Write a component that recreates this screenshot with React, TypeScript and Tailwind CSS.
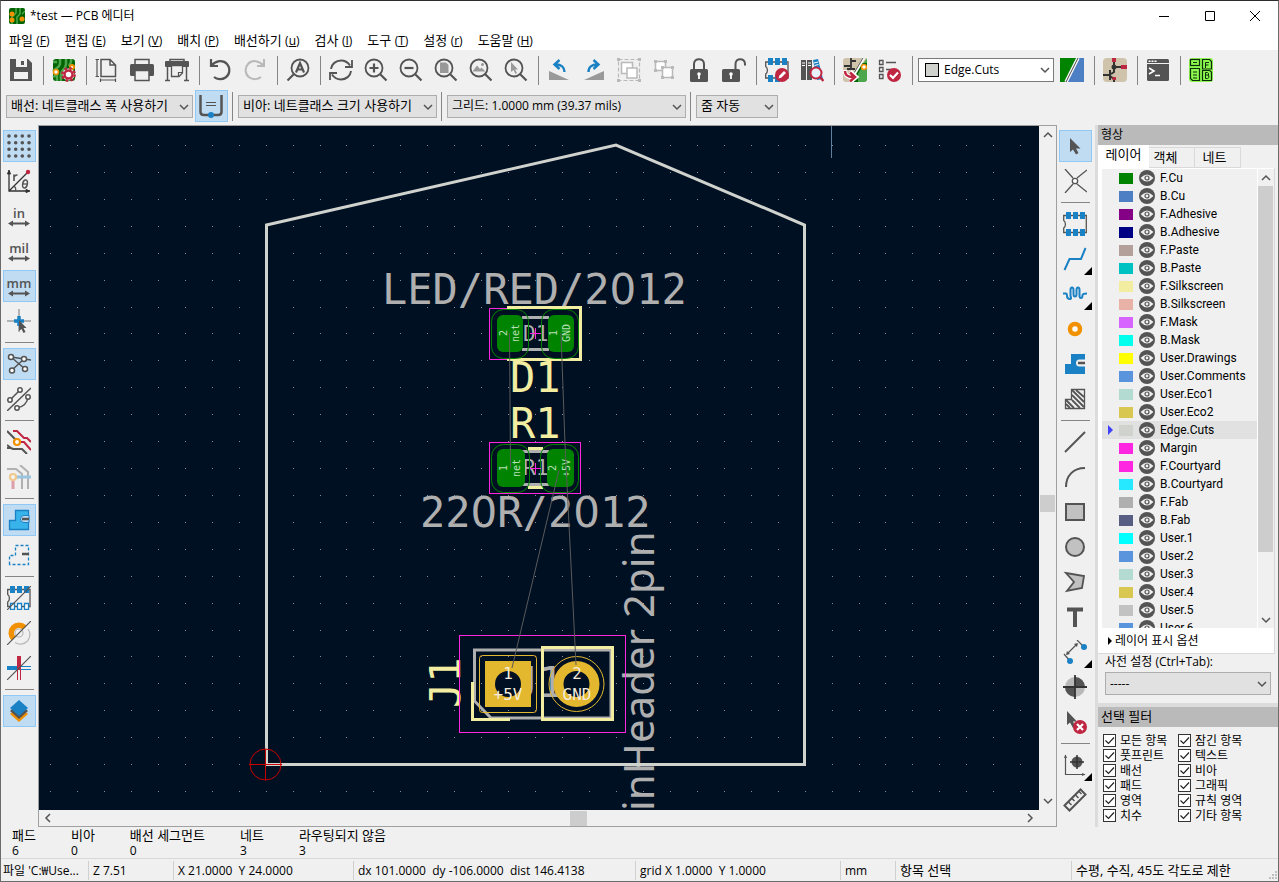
import { useState, type ReactNode } from "react";

const G = "#545454";
const B = "#1a81c4";
const R = "#bf2641";
const O = "#f29100";

function Icon({ children }: { children: ReactNode }) {
  return (
    <svg width="24" height="24" viewBox="0 0 24 24" fill="none" stroke={G} strokeWidth="2" aria-hidden="true">
      {children}
    </svg>
  );
}

const lens = (
  <>
    <circle cx="10" cy="10" r="8.5" strokeWidth="1.8" />
    <path d="M16 16l6.5 6.5" strokeWidth="2.2" />
  </>
);

const icons: Record<string, ReactNode> = {
  save: (
    <>
      <path d="M1 1H19L23 5V23H1Z" fill={G} stroke="none" />
      <path d="M7 1H18V9H7Z M5 14H19V21H5Z" fill="#f0f0f0" stroke="none" />
      <path d="M12 3h3v4h-3z" fill={G} stroke="none" />
    </>
  ),
  setup: (
    <>
      <rect x="1" y="1" width="22" height="22" rx="3" fill="#006400" stroke="none" />
      <path d="M8 1V5Q8 8 5 10L1 13M14 1V6Q14 9 11 12T9 23M19 1V4L17 8M1 4H5M1 19L5 17V23" stroke="#4ca64c" strokeWidth="2.5" />
      <circle cx="4" cy="14" r="2.5" fill="#fff" stroke={O} strokeWidth="1.5" />
      <circle cx="20" cy="9" r="2" fill="#fff" stroke={O} />
      <circle cx="16.5" cy="16.5" r="6" fill="#fff" stroke="none" />
      <circle cx="16.5" cy="16.5" r="6.2" stroke={R} strokeWidth="2.5" strokeDasharray="2.6 2.27" />
      <circle cx="16.5" cy="16.5" r="4" fill="#fff" stroke={R} strokeWidth="2.5" />
    </>
  ),
  page: (
    <>
      <path d="M6 1.5H15L20.5 7V18.5H6Z M15 1.5V7H20.5" strokeWidth="1.5" />
      <path d="M2 1V19M.5 1.5H4M.5 18.5H4M5 22H21M5.5 20.5V24M20.5 20.5V24" strokeWidth="1.2" />
    </>
  ),
  print: (
    <>
      <path d="M5 6V1.5H19V6" strokeWidth="1.5" />
      <rect x="0" y="6" width="24" height="12" rx="1.5" fill={G} stroke="none" />
      <path d="M5 12.5H19V22.5H5Z" fill="#f0f0f0" strokeWidth="1.5" />
    </>
  ),
  plot: (
    <>
      <path d="M5 3V1.5H19V3" strokeWidth="1.5" />
      <rect x="0" y="3" width="24" height="6" rx="1" fill={G} stroke="none" />
      <path d="M2.5 9V22.5M21.5 9V22.5M0 22.5H5M19 22.5H24" strokeWidth="1.5" />
      <path d="M6.5 7.5H17.5V15L14 18.5H6.5Z" fill="#f0f0f0" strokeWidth="1.3" />
      <path d="M13.5 18.5V14.5H17.5" strokeWidth="1.2" />
    </>
  ),
  undo: <path d="M3 1V8H10M3.5 7.5C8 2.5 15 1.5 19 6C23 10.5 21.5 17 17.5 19.5C14 22 9 21.5 6 19" strokeWidth="2.2" />,
  redo: <path d="M21 1V8H14M20.5 7.5C16 2.5 9 1.5 5 6C1 10.5 2.5 17 6.5 19.5C10 22 15 21.5 18 19" stroke="#b9b9b9" />,
  find: (
    <>
      <circle cx="14" cy="10" r="8.5" strokeWidth="1.8" />
      <path d="M8 16L1.5 22.5" strokeWidth="2.2" />
      <path d="M10 14.5L14 5L18 14.5M11.5 11.5H16.5" strokeWidth="2.2" />
    </>
  ),
  refresh: (
    <>
      <path d="M2 11C2.5 6 7 2.5 12 2.5C16 2.5 19 4.5 21 7.5M22 13C21.5 18 17 21.5 12 21.5C8 21.5 5 19.5 3 16.5" />
      <path d="M23 2V9H16M1 22V15H8" strokeWidth="1.8" />
    </>
  ),
  zoomIn: (
    <>
      {lens}
      <path d="M10 5.5V14.5M5.5 10H14.5" strokeWidth="2.2" />
    </>
  ),
  zoomOut: (
    <>
      {lens}
      <path d="M5.5 10H14.5" strokeWidth="2.2" />
    </>
  ),
  zoomPage: (
    <>
      {lens}
      <path d="M6 4.5H12L14.5 7V15H6Z" fill="#999" stroke="none" />
    </>
  ),
  zoomObjects: (
    <>
      {lens}
      <path d="M3.5 13.5L8 7.5L11 11L12.5 9.5L16.5 13.5Z" fill="#999" stroke="none" />
      <circle cx="13.5" cy="6.5" r="1.5" fill="#999" stroke="none" />
    </>
  ),
  zoomSel: (
    <>
      {lens}
      <path d="M7 4V14L9.5 12L11.5 16L13 15L11 11.5H14Z" fill="#999" stroke="none" />
    </>
  ),
  rotL: (
    <>
      <path d="M2 13V22H22Z" fill="#999" stroke="none" />
      <path d="M17.5 14C17.5 9 14 6.5 9 6.5M12.5 2L7.5 6.5L12.5 11" stroke={B} strokeWidth="2.4" />
    </>
  ),
  rotR: (
    <>
      <path d="M22 13V22H2Z" fill="#999" stroke="none" />
      <path d="M6.5 14C6.5 9 10 6.5 15 6.5M11.5 2L16.5 6.5L11.5 11" stroke={B} strokeWidth="2.4" />
    </>
  ),
  group: (
    <g stroke="#b9b9b9">
      <path d="M1.5 1.5H22.5V22.5H1.5Z" strokeWidth="1.2" strokeDasharray="4 2" />
      <path d="M4.5 4.5H15.5V15.5H4.5Z" fill="#fff" strokeWidth="1.5" />
      <path d="M10 10H20V20H10Z" fill="#fff" strokeWidth="1.5" />
      <path d="M0 0h3v3h-3zM21 0h3v3h-3zM0 21h3v3h-3zM21 21h3v3h-3z" fill="#b9b9b9" stroke="none" />
    </g>
  ),
  ungroup: (
    <g stroke="#b9b9b9">
      <path d="M3.5 3.5H13.5V12.5H3.5Z" fill="#fff" strokeWidth="1.5" />
      <path d="M10.5 9.5H20.5V19.5H10.5Z" fill="#fff" strokeWidth="1.5" />
      <path
        d="M2 2h3v3h-3zM12 2h3v3h-3zM2 11h3v3h-3zM9 8h3v3h-3zM19 8h3v3h-3zM9 18h3v3h-3zM19 18h3v3h-3z"
        fill="#b9b9b9"
        stroke="none"
      />
    </g>
  ),
  lock: (
    <>
      <path d="M7 11V6C7 -.5 17 -.5 17 6V11" />
      <rect x="3" y="11" width="18" height="13" rx="1.5" fill={G} stroke="none" />
      <circle cx="12" cy="16" r="1.8" fill="#fff" stroke="none" />
      <path d="M12 16V21" stroke="#fff" strokeWidth="1.8" />
    </>
  ),
  unlock: (
    <>
      <path d="M13.5 11V6C13.5 -.5 23 -.5 23 6V7.5" />
      <rect x="0" y="11" width="18" height="13" rx="1.5" fill={G} stroke="none" />
      <circle cx="9" cy="16" r="1.8" fill="#fff" stroke="none" />
      <path d="M9 16V21" stroke="#fff" strokeWidth="1.8" />
    </>
  ),
  fpEdit: (
    <>
      <path d="M.7 4H23V20H.7V16C3 14.5 3 10 .7 8.5Z" strokeWidth="1.3" />
      <path d="M3 0h5v7h-5zM10 0h5v7h-5zM17 0h5v7h-5zM3 17h5v7h-5zM10 17h5v7h-5z" fill={B} stroke="none" />
      <circle cx="17" cy="17" r="7" fill={R} stroke="none" />
      <path d="M13.5 20.5L14.5 17.5L19 13L21 15L16.5 19.5Z" fill="#fff" stroke="none" />
    </>
  ),
  library: (
    <>
      <path d="M1 2H6V22H1ZM7 2H12V22H7Z" fill={G} stroke="none" />
      <path d="M13 2L18 1L23 21L17 22Z" fill={B} stroke="none" />
      <path d="M2 5H5M2 7.5H5M8 5H11M8 7.5H11M14 5L18 4M14.5 7.5L18.5 6.5" stroke="#fff" strokeWidth="1" />
      <circle cx="16" cy="15" r="5.5" fill="#e8f2fa" stroke={R} />
      <path d="M20 19L23.5 23" stroke={R} strokeWidth="2.5" />
    </>
  ),
  updatePcb: (
    <>
      <rect width="24" height="24" rx="3" fill="#cfc4ab" stroke="none" />
      <path d="M24 0V21Q24 24 21 24H7Z" fill="#4ca64c" stroke="none" />
      <path d="M24 7H18L13 15V24" stroke="#006400" strokeWidth="4" />
      <path d="M8 0V11M1 8H8M4 11H12M8 3H13" stroke="#333" strokeWidth="1.8" />
      <path d="M21 0L8 22" stroke="#fff" strokeWidth="2.5" />
      <path d="M20 0L7 22" stroke="#333" strokeWidth=".8" />
      <circle cx="21" cy="9" r="2.5" fill="#fff" stroke={O} strokeWidth="1.5" />
      <path d="M2 12C2 18 5 19 9 19M7 13.5L13 19L7 24" stroke="#fff" strokeWidth="4.5" />
      <path d="M2 13C2 18 5 19 10 19M7 14.5L12 19L7 23.5" stroke={R} strokeWidth="2.5" />
    </>
  ),
  drc: (
    <>
      <path d="M1.5 2.5H5V6.5H1.5ZM1.5 9.5H5V13.5H1.5ZM1.5 16.5H5V20.5H1.5Z" strokeWidth="1.3" />
      <path d="M8 4.5H18M8 11.5H14" strokeWidth="1.3" />
      <circle cx="16" cy="17" r="7" fill={R} stroke="none" />
      <path d="M12 17L15 20L20 14.5" stroke="#fff" strokeWidth="2.2" />
    </>
  ),
  layerPair: (
    <>
      <path d="M0 0H18L6 24H0Z" fill="#008400" stroke="none" />
      <path d="M19 0H24V24H7Z" fill="#4d7fc4" stroke="none" />
      <path d="M18 0L6 24" stroke="#fff" strokeWidth="3.5" />
      <path d="M18 0L6 24" stroke="#444" strokeWidth="1" />
    </>
  ),
  schematic: (
    <>
      <rect width="24" height="24" rx="4" fill="#cfc4ab" stroke="none" />
      <path d="M11 3V14L8 16M11 9H20M0 17H7M7 12V22M7 18L11 21V24" stroke="#333" />
      <circle cx="11" cy="9" r="2.5" fill="#333" stroke="none" />
      <path d="M9 0h4v4h-4zM18 7h6v4h-6zM9.5 19h3.5v3h-3.5z" fill={R} stroke="none" />
    </>
  ),
  console: (
    <>
      <rect x="1" y="1" width="22" height="22" rx="1.5" fill={G} stroke="none" />
      <path d="M1 5.5H23" stroke="#f0f0f0" strokeWidth="1" />
      <path d="M2.5 3.2h2M5.5 3.2h2M8.500 3.2h2" stroke="#fff" strokeWidth="1.5" />
      <path d="M3 10L8 13L3 16M9 17.5H14" stroke="#fff" strokeWidth="1.6" />
    </>
  ),
  fabPlugin: (
    <>
      <rect width="24" height="24" rx="3" fill="#8cf74c" stroke="none" />
      <g stroke="#0c2c0c" strokeWidth="1.2">
        <rect x="1.5" y="1.5" width="9" height="6" />
        <path d="M1.500 10.500H10.500V22.500H3.500L1.500 20.500Z" />
        <path d="M13.5 1.500H20.500L22.500 3.500V11H13.5ZM13.5 12.5H20.5L22.5 14V22.5H13.5Z" />
        <path
          d="M4 4.5H8M4 14H8M4 17H8M4 20H8M16.5 10V4.5H20M16.5 7H19.5M16.5 20.5V14.5H18.5Q20 15 19.5 17H16.5M19.5 17Q21 20 18.5 20.5H16.5"
          strokeWidth="1"
        />
      </g>
    </>
  ),
  trackWidth: (
    <>
      <path d="M1.5 1V18Q1.5 21 5 21H19Q22.5 21 22.5 18V1" strokeWidth="2.5" />
      <path d="M7 8.5H17M7 11.5H17" strokeWidth="1" />
      <circle cx="12" cy="21" r="3" fill={B} stroke="none" />
    </>
  ),
  grid: (
    <path
      d="M2 2h.01M8.7 2h.01M15.3 2h.01M22 2h.01M2 8.7h.01M8.7 8.7h.01M15.3 8.7h.01M22 8.7h.01M2 15.3h.01M8.7 15.3h.01M15.3 15.3h.01M22 15.3h.01M2 22h.01M8.7 22h.01M15.3 22h.01M22 22h.01"
      strokeWidth="3.6"
      strokeLinecap="round"
    />
  ),
  polar: (
    <>
      <path d="M2 2V22H22M2 22L21 3" strokeWidth="1.3" stroke="#333" />
      <path d="M.5 5L2 1L3.5 5ZM19 20.5L23 22L19 23.5Z" fill="#333" stroke="#333" strokeWidth="1" />
      <path d="M7 17Q9.5 19 8.5 22" strokeWidth="1.2" />
      <path d="M7 12V5.5M7 8Q8.5 5.5 10.5 6.2" strokeWidth="1.6" />
      <ellipse cx="18" cy="15" rx="2.3" ry="4" transform="rotate(12 18 15)" strokeWidth="1.5" />
      <path d="M15.5 15H20.5" strokeWidth="1.3" />
      <circle cx="21" cy="3" r="2.2" fill={R} stroke="none" />
    </>
  ),
  cursor: (
    <>
      <path d="M0 12H24M12 0V23" strokeWidth="1" stroke="#777" />
      <path d="M7 12H17M12 7V17" stroke={B} strokeWidth="3.5" />
      <path d="M12 11V22L14.5 20L16.5 24L18.5 23L16.5 19H19.5Z" fill={G} stroke="none" />
    </>
  ),
  ratsnest: (
    <g strokeWidth="1.5">
      <path d="M4 5L18 17M5 18L17 7M4 5L24 8" />
      <circle cx="4" cy="5" r="2.5" fill="#fff" />
      <circle cx="17" cy="7" r="2.5" fill="#fff" />
      <circle cx="5" cy="18.5" r="2.5" fill="#fff" />
      <circle cx="18" cy="17" r="2.5" fill="#fff" />
    </g>
  ),
  curvedRats: (
    <g strokeWidth="1.5">
      <path d="M0 24L24 1M3 13L13 3M10 21Q20 19 21 10" />
      <circle cx="3" cy="13" r="2.2" fill="#fff" />
      <circle cx="13" cy="3" r="2.2" fill="#fff" />
      <circle cx="21" cy="10" r="2.2" fill="#fff" />
      <circle cx="10" cy="21" r="2.2" fill="#fff" />
    </g>
  ),
  netHighlight: (
    <>
      <path d="M0 1L9 10M0 18H4L6 19H15L20 24M0 15L4 18" />
      <path d="M6 1H10L17 8H20L24 12M12 12H17L24 20" stroke={R} />
      <circle cx="10" cy="12" r="3" fill="#fff" stroke={O} strokeWidth="2.2" />
    </>
  ),
  netFade: (
    <g opacity=".4">
      <path d="M0 4H9L15 9V24M13 0L21 7V24" />
      <path d="M6 13V24" stroke={R} strokeWidth="3" />
      <path d="M8 12H24" stroke={B} strokeWidth="3" />
      <circle cx="6" cy="12" r="3" fill="#fff" stroke={O} strokeWidth="2.2" />
    </g>
  ),
  zoneFill: (
    <>
      <path d="M2.5 21.5V12.5H8.5V2.5H21.5V21.5Z" fill="#39b4ea" stroke={B} strokeWidth="1.3" />
      <path d="M22 7.5H17A3.500 3.500 0 0 0 17 14.500H22Z" fill="#c0dcf3" stroke={B} strokeWidth="1" />
      <path d="M15 11H22" strokeWidth="2.5" />
    </>
  ),
  zoneOutline: (
    <>
      <path d="M2.5 21.5V12.5H8.5V2.5H21.5V21.5Z" stroke={B} strokeWidth="1.3" strokeDasharray="3 2" />
      <path d="M15 11H22" strokeWidth="2.5" />
    </>
  ),
  fpSketch: (
    <>
      <path d="M.7 3.5H23V20.5H.7V16C3 14.5 3 10 .7 8.5Z" strokeWidth="1.3" />
      <path d="M3 0h5v7h-5zM10 0h5v7h-5zM17 0h5v7h-5z" fill={B} stroke="none" />
      <path d="M3.5 17.5h4v6h-4zM10.5 17.5h4v6h-4zM17.5 17.5h4v6h-4z" fill="#fff" stroke={B} strokeWidth="1.3" />
      <path d="M0 24L24 0" strokeWidth="1.2" />
    </>
  ),
  viaSketch: (
    <>
      <path d="M6.500 17.500A7.500 7.500 0 1 1 17.500 6.500" stroke={O} strokeWidth="5.5" />
      <path d="M21 8A9.5 9.5 0 0 1 8 21.5" stroke="#b9b9b9" strokeWidth="1.2" />
      <circle cx="12" cy="12" r="4" stroke="#b9b9b9" strokeWidth="1.2" />
      <path d="M0 24L24 0" strokeWidth="1.2" />
    </>
  ),
  trackSketch: (
    <>
      <path d="M0 12H12" stroke={B} strokeWidth="4" />
      <path d="M12 10.5H24M12 13.5H24" stroke={B} strokeWidth="1" />
      <path d="M12 0V14" stroke={R} strokeWidth="4" />
      <path d="M10.5 14V24M13.5 14V24" stroke={R} strokeWidth="1" />
      <path d="M0 24L24 0" strokeWidth="1.2" />
    </>
  ),
  layersMgr: (
    <>
      <path d="M12 7L21 15L12 23L3 15Z" fill={O} stroke="none" />
      <path d="M12 4L21 12L12 20L3 12Z" fill={G} stroke="none" />
      <path d="M12 1L21 9L12 17L3 9Z" fill={B} stroke="none" />
    </>
  ),
  select: <path d="M7 4V18L10 15.5L13 20.5L15.5 19L13 14.5H17.5Z" fill={G} stroke="none" />,
  localRats: (
    <>
      <path d="M2 0L10 9M24 1L14 9M2 24L10 15M24 23L14 15" strokeWidth="1.3" />
      <circle cx="12" cy="12" r="2.7" fill="#fff" strokeWidth="1.3" />
    </>
  ),
  footprint: (
    <>
      <path d="M.7 3.5H23.300V20.5H.7V16C3 14.5 3 10 .7 8.5Z" strokeWidth="1.3" />
      <path d="M3 0h5v7h-5zM10 0h5v7h-5zM17 0h5v7h-5zM3 17h5v7h-5zM10 17h5v7h-5zM17 17h5v7h-5z" fill={B} stroke="none" />
    </>
  ),
  route: <path d="M1.5 23L6.5 12H18L22.5 1" stroke={B} />,
  tune: (
    <path
      d="M0 11.5H3Q4 11.5 4 14T6.5 17T7.5 14V8Q7.5 5.5 9 5.5T10.500 8V12Q10.5 14.5 12 14.5T13.5 12V8Q13.5 5.5 15 5.5T16.5 8V14Q16.5 16 18 16T19.5 13Q20 11.5 24 11.5"
      stroke={B}
    />
  ),
  via: <circle cx="12" cy="12" r="5" fill="#fff" stroke={O} strokeWidth="4.5" />,
  zone: (
    <>
      <path d="M2 22V12H8V2H22V22Z" fill={B} stroke="none" />
      <path d="M22 7.500H16.500A3.500 3.500 0 0 0 16.500 14.500H22Z" fill="#f0f0f0" stroke="none" />
      <path d="M15 11H22" strokeWidth="2.5" />
    </>
  ),
  ruleArea: (
    <>
      <path d="M2.5 21.5V12.5H8.5V2.5H21.5V21.5Z" strokeWidth="1.3" />
      <path d="M9 3L21 15M9 8L21 20M9 13L17 21M3 13L11 21M3 17L7 21M13 3L21 10" strokeWidth="1.8" />
    </>
  ),
  line: <path d="M2 22L22 2" />,
  arc: <path d="M3 22C3 11 10 3 22 3" />,
  rect: <rect x="3" y="4" width="18" height="16" fill="#c1c1c1" />,
  circle: <circle cx="12" cy="12" r="9" fill="#c1c1c1" />,
  poly: <path d="M3 3L21 6L19 18L4 21L11 12Z" fill="#c1c1c1" strokeWidth="1.8" />,
  text: <path d="M4 4.5H20M12 4V22" strokeWidth="4" />,
  dimension: (
    <>
      <path d="M4 14L14 4M1 14L7 21M14 0L21 7" strokeWidth="1.2" />
      <path d="M3 15L4 11L7 14ZM15 3L11 4L14 7Z" fill={G} stroke="none" />
      <circle cx="7" cy="21" r="3" fill={B} stroke="none" />
      <circle cx="21" cy="7" r="3" fill={B} stroke="none" />
    </>
  ),
  target: (
    <>
      <circle cx="12" cy="12" r="10" fill="#b9b9b9" stroke="none" />
      <path d="M12 12V2A10 10 0 0 1 22 12ZM12 12V22A10 10 0 0 1 2 12Z" fill={G} stroke="none" />
      <path d="M12 0V24M0 12H24" strokeWidth="1.8" stroke="#333" />
    </>
  ),
  del: (
    <>
      <path d="M4 1V15L7 12.5L10 18L12.5 16.5L10 11.5H14Z" fill={G} stroke="none" />
      <circle cx="17" cy="17" r="7" fill={R} stroke="none" />
      <path d="M14 14L20 20M20 14L14 20" stroke="#fff" strokeWidth="2.2" />
    </>
  ),
  origin: (
    <>
      <path d="M2.500 2V21.500H22" strokeWidth="1.2" />
      <path d="M1 5L2.500 1.5L4 5ZM19 20L22.5 21.500L19 23Z" fill={G} stroke="none" />
      <circle cx="14" cy="9" r="5.5" fill={G} stroke="none" />
      <path d="M14 2V16M7 9H21" strokeWidth="1.5" stroke="#333" />
    </>
  ),
  measure: (
    <>
      <path d="M1.5 17.5L17.5 1.5L22.5 6.5L6.5 22.5Z" />
      <path d="M5.5 14L8.5 17M9 10.5L11.5 13M12.5 7L15.5 10M16 3.5L18.5 6" strokeWidth="1.5" />
    </>
  ),
};

interface ToolProps {
  icon: string;
  label: string;
  more?: boolean;
}

function TopTool({ icon, label }: ToolProps) {
  return (
    <button aria-label={label} className="flex h-[35px] w-[35px] shrink-0 items-center pl-[6px] hover:bg-[#d8e6f2]">
      <Icon>{icons[icon]}</Icon>
    </button>
  );
}

function TopSep() {
  return <div className="mr-[2px] ml-[5px] h-[29px] w-px shrink-0 bg-[#858585]" />;
}

interface SideToolProps extends ToolProps {
  active?: boolean;
  onClick?: () => void;
}

function SideTool({ icon, label, more, active, onClick }: SideToolProps) {
  return (
    <button
      aria-label={label}
      aria-pressed={active}
      onClick={onClick}
      className={`relative mb-[3px] flex h-8 w-[33px] shrink-0 items-center border pl-[3px] ${
        active ? "border-[#90c8f6] bg-[#c0dcf3]" : "border-transparent"
      }`}
    >
      {icons[icon] ? (
        <Icon>{icons[icon]}</Icon>
      ) : (
        <span className="flex w-6 flex-col items-center text-[13px] leading-[14px] font-semibold text-[#545454]">
          {icon}
          <svg width="22" height="7" viewBox="0 0 22 7" fill={G} aria-hidden="true">
            <path d="M0 3.5L5 .5V2.5H17V.5L22 3.5L17 6.5V4.5H5V6.5Z" />
          </svg>
        </span>
      )}
      {more && (
        <svg className="absolute right-[-1px] bottom-[-1px]" width="8" height="8" viewBox="0 0 8 8" aria-hidden="true">
          <path d="M8 0V8H0Z" fill="#000" />
        </svg>
      )}
    </button>
  );
}

function SideSep() {
  return <div className="mt-[2px] mb-[5px] ml-[2px] h-px w-[29px] shrink-0 bg-[#858585]" />;
}

const chevrons = {
  up: "M1 7L5 3L9 7",
  down: "M1 3L5 7L9 3",
  left: "M7 1L3 5L7 9",
  right: "M3 1L7 5L3 9",
};

function Chevron({ dir, className = "" }: { dir: keyof typeof chevrons; className?: string }) {
  return (
    <svg className={className} width="10" height="10" viewBox="0 0 10 10" fill="none" stroke={G} strokeWidth="1.5" aria-hidden="true">
      <path d={chevrons[dir]} />
    </svg>
  );
}

interface ComboProps {
  label: string;
  value: string;
  width: string;
  text?: string;
}

function Combo({ label, value, width, text = "text-[13px]" }: ComboProps) {
  return (
    <div className={`relative h-[23px] shrink-0 ${width}`}>
      <select aria-label={label} className={`h-full w-full appearance-none border border-[#adadad] bg-[#e1e1e1] pr-4 pl-1 ${text}`}>
        <option>{value}</option>
      </select>
      <Chevron dir="down" className="pointer-events-none absolute top-[7px] right-1" />
    </div>
  );
}

const menus = [
  ["파일", "F"],
  ["편집", "E"],
  ["보기", "V"],
  ["배치", "P"],
  ["배선하기", "u"],
  ["검사", "I"],
  ["도구", "T"],
  ["설정", "r"],
  ["도움말", "H"],
];

// groups are divided by a separator
const topTools = [
  ["save"],
  ["setup"],
  ["page", "print", "plot"],
  ["undo", "redo"],
  ["find"],
  ["refresh", "zoomIn", "zoomOut", "zoomPage", "zoomObjects", "zoomSel"],
  ["rotL", "rotR", "group", "ungroup", "lock", "unlock"],
  ["fpEdit", "library"],
  ["updatePcb", "drc"],
];

const leftTools = [
  ["grid", "polar", "in", "mil", "mm", "cursor"],
  ["ratsnest", "curvedRats"],
  ["netHighlight", "netFade"],
  ["zoneFill", "zoneOutline"],
  ["fpSketch", "viaSketch", "trackSketch"],
  ["layersMgr"],
];

const rightTools = [
  ["select", "localRats"],
  ["footprint", "route", "tune", "via", "zone", "ruleArea"],
  ["line", "arc", "rect", "circle", "poly", "text", "dimension", "target", "del"],
  ["origin", "measure"],
];

const withMenu = ["route", "tune", "dimension", "origin"];

const layers = [
  { name: "F.Cu", color: "bg-[#008400]" },
  { name: "B.Cu", color: "bg-[#4d7fc4]" },
  { name: "F.Adhesive", color: "bg-[#840084]" },
  { name: "B.Adhesive", color: "bg-[#000084]" },
  { name: "F.Paste", color: "bg-[#b4a09a]" },
  { name: "B.Paste", color: "bg-[#00c2c2]" },
  { name: "F.Silkscreen", color: "bg-[#f2eda1]" },
  { name: "B.Silkscreen", color: "bg-[#e8b2a7]" },
  { name: "F.Mask", color: "bg-[#d864ff]" },
  { name: "B.Mask", color: "bg-[#02ffee]" },
  { name: "User.Drawings", color: "bg-[#ffff00]" },
  { name: "User.Comments", color: "bg-[#5994dc]" },
  { name: "User.Eco1", color: "bg-[#b4dbd2]" },
  { name: "User.Eco2", color: "bg-[#d8c852]" },
  { name: "Edge.Cuts", color: "bg-[#d0d2cd]" },
  { name: "Margin", color: "bg-[#ff26e2]" },
  { name: "F.Courtyard", color: "bg-[#ff26e2]" },
  { name: "B.Courtyard", color: "bg-[#26e9ff]" },
  { name: "F.Fab", color: "bg-[#afafaf]" },
  { name: "B.Fab", color: "bg-[#585d84]" },
  { name: "User.1", color: "bg-[#00ffff]" },
  { name: "User.2", color: "bg-[#5994dc]" },
  { name: "User.3", color: "bg-[#b4dbd2]" },
  { name: "User.4", color: "bg-[#d8c852]" },
  { name: "User.5", color: "bg-[#c2c2c2]" },
  { name: "User.6", color: "bg-[#5994dc]" },
];

const filters = [
  "모든 항목",
  "잠긴 항목",
  "풋프린트",
  "텍스트",
  "배선",
  "비아",
  "패드",
  "그래픽",
  "영역",
  "규칙 영역",
  "치수",
  "기타 항목",
];

const counts = [
  ["패드", 6],
  ["비아", 0],
  ["배선 세그먼트", 0],
  ["네트", 3],
  ["라우팅되지 않음", 3],
];

const gridDots = Array.from({ length: 26 }, (_, row) =>
  Array.from({ length: 60 }, (_, col) => `M${Math.round(50 + col * 26.95)} ${Math.round(145 + row * 26.92)}h1v1h-1z`).join("")
).join("");

function Board() {
  return (
    <svg className="block h-full w-full" role="img" aria-label="PCB">
      <g transform="translate(-39 -126)" fill="none" fontFamily="'DejaVu Sans Mono', monospace">
        <path d={gridDots} fill="#848b96" shapeRendering="crispEdges" />
        <path d="M831.5 126V158" stroke="#5f7f9c" />

        <g fill="#afafaf" fontSize="42">
          <text x="382" y="304">
            LED/RED/2<tspan fontFamily="'DejaVu Sans'">0</tspan>12
          </text>
          <text x="420" y="527">
            22<tspan fontFamily="'DejaVu Sans'">0</tspan>R/2<tspan fontFamily="'DejaVu Sans'">0</tspan>12
          </text>
          <text transform="translate(654 811) rotate(-90)" fontFamily="'Noto Sans'">
            inHeader 2pin
          </text>
        </g>

        <path d="M266.5 225L616 145L804.5 225V764.5H266.5Z" stroke="#d0d2cd" strokeWidth="3" />

        {/* D1 */}
        <path d="M509 308.5H489.5V359.5H509" stroke="#ff26e2" />
        <path d="M507 307.5H580.5V359.5H507" stroke="#f2eda1" strokeWidth="3" />
        <path d="M522 317.5H549M522 349.5H549" stroke="#afafaf" strokeWidth="3" />
        <text x="523" y="341" fill="#afafaf" fontSize="21">
          D1
        </text>
        <g stroke="#008400">
          <rect x="491.5" y="309.5" width="37" height="49" rx="12" />
          <rect x="541.5" y="309.5" width="37" height="49" rx="12" />
        </g>
        <rect x="497" y="315" width="26" height="37" rx="6" fill="#008400" />
        <rect x="548" y="315" width="26" height="37" rx="6" fill="#008400" />
        <path d="M530 333.5H541M535.5 328V339" stroke="#ff26e2" />

        {/* R1 */}
        <rect x="489.5" y="442.5" width="91" height="51" stroke="#ff26e2" />
        <path d="M528 448.5H543M528 487.5H543" stroke="#f2eda1" strokeWidth="3" />
        <path d="M522 451.5H549M522 484.5H549" stroke="#afafaf" strokeWidth="3" />
        <text x="523" y="475" fill="#afafaf" fontSize="21">
          R1
        </text>
        <g stroke="#008400">
          <rect x="491.5" y="444.5" width="38" height="48" rx="12" />
          <rect x="540.5" y="444.5" width="38" height="48" rx="12" />
        </g>
        <rect x="497" y="449" width="28" height="38" rx="6" fill="#008400" />
        <rect x="547" y="449" width="27" height="38" rx="6" fill="#008400" />
        <path d="M530 468.5H541M535.5 463V474" stroke="#ff26e2" />

        <g fill="#f2eda1" fontSize="42">
          <text x="510" y="392">
            D1
          </text>
          <text x="510" y="438">
            R1
          </text>
          <text transform="translate(460 708) rotate(-90)">J1</text>
        </g>

        <g fill="#b9e0b9" fontSize="10" textAnchor="middle">
          <text transform="translate(507 333) rotate(-90)">2</text>
          <text transform="translate(519 333) rotate(-90)">net</text>
          <text transform="translate(557 333) rotate(-90)">1</text>
          <text transform="translate(570 333) rotate(-90)">GND</text>
          <text transform="translate(507 468) rotate(-90)">1</text>
          <text transform="translate(520 468) rotate(-90)">net</text>
          <text transform="translate(556 468) rotate(-90)">2</text>
          <text transform="translate(570 468) rotate(-90)">+5V</text>
        </g>

        {/* J1 */}
        <rect x="459.5" y="635.5" width="166" height="97" stroke="#ff26e2" />
        <path d="M474.5 650H611V718H491L474.5 701Z" stroke="#afafaf" strokeWidth="3" />
        <text x="513" y="697" fill="#afafaf" fontSize="42">
          J1
        </text>
        <path d="M542.5 647.5H612.5V719.5H542.5ZM472.5 682V719.5H510" stroke="#f2eda1" strokeWidth="3" />
        <rect x="485" y="661" width="46" height="46" fill="#e3b72e" />
        <circle cx="508" cy="684" r="13" fill="#001023" />
        <circle cx="576.5" cy="684" r="18" stroke="#e3b72e" strokeWidth="10" fill="#001023" />
        <rect x="479.5" y="655.5" width="57" height="57" rx="3" stroke="#e3b72e" />
        <circle cx="576.5" cy="684" r="27.5" stroke="#e3b72e" />
        <g fill="#f2ecdc" fontSize="16" textAnchor="middle">
          <text x="508" y="679">
            1
          </text>
          <text x="508" y="700">
            +5V
          </text>
          <text x="577" y="679">
            2
          </text>
          <text x="577" y="700">
            GND
          </text>
        </g>

        {/* ratsnest */}
        <path d="M509.5 333L510.5 468M561 333L565 444L576 665M559 470L512 668" stroke="#5a5a5a" />
        <g stroke="#c80000">
          <circle cx="265.5" cy="764.5" r="15.5" />
          <path d="M249 764.5H282M265.5 749V780" />
        </g>
      </g>
    </svg>
  );
}

interface LayerRowProps {
  name: string;
  color: string;
  active: boolean;
  onSelect: () => void;
}

function LayerRow({ name, color, active, onSelect }: LayerRowProps) {
  return (
    <li onClick={onSelect} className={`flex h-[18px] items-center ${active ? "bg-[#e1e1e1]" : ""}`}>
      <span className="flex w-[17px] justify-center">
        {active && (
          <svg width="5" height="10" viewBox="0 0 5 10" aria-hidden="true">
            <path d="M0 0L5 5L0 10Z" fill="#4040ff" />
          </svg>
        )}
      </span>
      <span className={`h-[11px] w-[14px] ${color}`} />
      <button aria-label={name} className="mr-[5px] ml-[6px]">
        <svg className="block" width="16" height="16" viewBox="0 0 16 16" aria-hidden="true">
          <circle cx="8" cy="8" r="8" fill={G} />
          <path d="M1.5 8Q8 1 14.500 8Q8 15 1.5 8Z" fill="#f0f0f0" />
          <circle cx="8" cy="8" r="2" fill="#f0f0f0" stroke={G} strokeWidth="1.2" />
        </svg>
      </button>
      <span className="font-[Roboto] text-[12px] leading-[16px]">{name}</span>
    </li>
  );
}

export default function App() {
  const [activeLayer, setActiveLayer] = useState("Edge.Cuts");
  const [tool, setTool] = useState("select");
  const [toggles, setToggles] = useState(["grid", "mm", "ratsnest", "zoneFill", "layersMgr"]);

  const toggle = (name: string) =>
    setToggles((prev) => (prev.includes(name) ? prev.filter((t) => t !== name) : [...prev, name]));

  return (
    <div className="flex h-screen flex-col overflow-hidden border border-[#6b6b6b] border-t-[#2d2b2d] bg-[#f0f0f0] font-['Open_Sans','Noto_Sans_CJK_KR',sans-serif] text-[12px] text-black">
      <header className="shrink-0 bg-white">
        <div className="flex h-[29px] items-center pl-2">
          <svg width="16" height="16" viewBox="0 0 16 16" fill="none" aria-hidden="true">
            <rect width="16" height="16" rx="2" fill="#006400" />
            <path d="M7 0V5L3 9V16M11 0V6L8 9V16M16 3L13 6" stroke="#4ca64c" strokeWidth="1.5" />
            <circle cx="3" cy="6" r="2.5" fill={O} />
            <circle cx="3" cy="12" r="2.5" fill={O} />
            <circle cx="13" cy="11" r="2.5" fill={O} />
          </svg>
          <h1 className="ml-[5px] flex-1">*test — PCB 에디터</h1>
          <button aria-label="최소화" className="flex h-full w-[46px] items-center justify-center">
            <svg width="10" height="10" stroke="#000" aria-hidden="true">
              <path d="M0 5.5H10" />
            </svg>
          </button>
          <button aria-label="최대화" className="flex h-full w-[45px] items-center justify-center">
            <svg width="10" height="10" stroke="#000" fill="none" aria-hidden="true">
              <path d="M.5 .5H9.5V9.5H.5Z" />
            </svg>
          </button>
          <button aria-label="닫기" className="flex h-full w-[46px] items-center justify-center">
            <svg width="10" height="10" stroke="#000" aria-hidden="true">
              <path d="M0 0L10 10M10 0L0 10" />
            </svg>
          </button>
        </div>
        <nav className="flex h-[20px] items-center gap-[15px] pl-2 text-[13px]">
          {menus.map(([name, key]) => (
            <button key={name} className="leading-[20px] whitespace-nowrap">
              {name}{" "}
              <span className="text-[12px]">
                (<u>{key}</u>)
              </span>
            </button>
          ))}
        </nav>
      </header>

      <div className="flex h-[40px] shrink-0 items-center pl-[2px]">
        {topTools.map((group) => (
          <div key={group[0]} className="flex items-center">
            {group.map((name) => (
              <TopTool key={name} icon={name} label={name} />
            ))}
            <TopSep />
          </div>
        ))}
        <div className="relative ml-[3px] h-6 w-[136px] shrink-0">
          <select
            aria-label="활성 레이어"
            value={activeLayer}
            onChange={(e) => setActiveLayer(e.target.value)}
            className="h-full w-full appearance-none border border-[#7a7a7a] bg-white pl-[25px] text-[12px]"
          >
            {layers.map((l) => (
              <option key={l.name}>{l.name}</option>
            ))}
          </select>
          <span className="pointer-events-none absolute top-[5px] left-[7px] h-[14px] w-[14px] border border-black bg-[#d0d2cd]" />
          <Chevron dir="down" className="pointer-events-none absolute top-[7px] right-1" />
        </div>
        <TopTool icon="layerPair" label="레이어 쌍" />
        <TopSep />
        <TopTool icon="schematic" label="회로도" />
        <TopSep />
        <TopTool icon="console" label="콘솔" />
        <TopSep />
        <TopTool icon="fabPlugin" label="Fabrication" />
      </div>

      <div className="flex h-[35px] shrink-0 items-center pb-[3px] pl-[5px]">
        <Combo label="배선 폭" value="배선: 네트클래스 폭 사용하기" width="w-[187px]" />
        <button
          aria-label="자동 배선 폭"
          className="ml-[2px] flex h-8 w-[33px] shrink-0 items-center border border-[#90c8f6] bg-[#c0dcf3] pl-[3px]"
        >
          <Icon>{icons.trackWidth}</Icon>
        </button>
        <div className="mr-[5px] ml-[4px] h-[29px] w-px bg-[#858585]" />
        <Combo label="비아 크기" value="비아: 네트클래스 크기 사용하기" width="w-[199px]" />
        <div className="mr-[5px] ml-[4px] h-[29px] w-px bg-[#858585]" />
        <Combo label="그리드" value="그리드: 1.0000 mm (39.37 mils)" width="w-[239px]" text="text-[12px]" />
        <div className="mr-[5px] ml-[4px] h-[29px] w-px bg-[#858585]" />
        <Combo label="줌" value="줌 자동" width="w-[82px]" />
      </div>

      <div className="flex min-h-0 flex-1">
        <div className="flex w-[37px] shrink-0 flex-col items-start pt-[5px] pl-[2px]">
          {leftTools.map((group, i) => (
            <div key={group[0]}>
              {i > 0 && <SideSep />}
              {group.map((name) => (
                <SideTool key={name} icon={name} label={name} active={toggles.includes(name)} onClick={() => toggle(name)} />
              ))}
            </div>
          ))}
        </div>

        <main className="flex min-w-0 flex-1 flex-col border border-[#a0a0a0]">
          <div className="flex min-h-0 flex-1">
            <div className="min-w-0 flex-1 overflow-hidden bg-[#001023]">
              <Board />
            </div>
            <div className="flex w-[17px] shrink-0 flex-col items-center">
              <Chevron dir="up" className="my-[4px] shrink-0" />
              <div className="flex-[352]" />
              <div className="h-[17px] w-[15px] shrink-0 bg-[#cdcdcd]" />
              <div className="flex-[281]" />
              <Chevron dir="down" className="my-[4px] shrink-0" />
            </div>
          </div>
          <div className="flex h-[16px] shrink-0 items-center pr-[17px]">
            <Chevron dir="left" className="mx-[4px] shrink-0" />
            <div className="flex-[515]" />
            <div className="h-[15px] w-[17px] shrink-0 bg-[#cdcdcd]" />
            <div className="flex-[436]" />
            <Chevron dir="right" className="mx-[4px] shrink-0" />
          </div>
        </main>

        <div className="flex w-[38px] shrink-0 flex-col items-start pt-[5px] pl-[2px]">
          {rightTools.map((group, i) => (
            <div key={group[0]}>
              {i > 0 && <SideSep />}
              {group.map((name) => (
                <SideTool
                  key={name}
                  icon={name}
                  label={name}
                  more={withMenu.includes(name)}
                  active={tool === name}
                  onClick={() => setTool(name)}
                />
              ))}
            </div>
          ))}
        </div>

        <aside className="flex w-[183px] shrink-0 flex-col border-l-[3px] border-[#dcdcdc]">
          <h2 className="h-5 shrink-0 bg-[#bababa] pl-[3px] leading-[19px]">형상</h2>
          <div role="tablist" className="flex h-[23px] shrink-0 items-end text-[13px]">
            <button role="tab" aria-selected="true" className="h-[23px] w-[51px] bg-white pb-[3px]">
              레이어
            </button>
            <button role="tab" aria-selected="false" className="h-[21px] w-[46px] border border-l-0 border-[#d9d9d9] pr-[12px] pb-[2px]">
              객체
            </button>
            <button role="tab" aria-selected="false" className="h-[21px] w-[46px] border border-l-0 border-[#d9d9d9] pr-[6px] pb-[2px]">
              네트
            </button>
          </div>
          <div className="mr-[3px] flex min-h-0 flex-1 flex-col border-r border-b border-[#d9d9d9] bg-white pt-px pl-[4px]">
            <div className="flex min-h-0 flex-1 bg-[#f0f0f0]">
              <ul className="min-w-0 flex-1 overflow-hidden">
                {layers.map((l) => (
                  <LayerRow
                    key={l.name}
                    name={l.name}
                    color={l.color}
                    active={l.name === activeLayer}
                    onSelect={() => setActiveLayer(l.name)}
                  />
                ))}
              </ul>
              <div className="mr-px flex w-[16px] shrink-0 flex-col items-center border-l border-white">
                <Chevron dir="up" className="mt-[4px] mb-[3px] shrink-0" />
                <div className="w-[15px] flex-[367] bg-[#cdcdcd]" />
                <div className="flex-[60]" />
                <Chevron dir="down" className="my-[3px] shrink-0" />
              </div>
            </div>
            <button className="flex h-[25px] shrink-0 items-center pl-[6px] text-[12px]">
              <svg width="4" height="8" viewBox="0 0 4 8" className="mr-[3px]" aria-hidden="true">
                <path d="M0 0L4 4L0 8Z" />
              </svg>
              레이어 표시 옵션
            </button>
          </div>
          <div className="h-[49px] shrink-0 pr-[7px] pl-[7px]">
            <label htmlFor="preset" className="block h-[18px] leading-[16px]">
              사전 설정 (Ctrl+Tab):
            </label>
            <div className="relative h-[23px]">
              <select id="preset" className="h-full w-full appearance-none border border-[#adadad] bg-[#e1e1e1] pl-1 text-[12px]">
                <option>-----</option>
              </select>
              <Chevron dir="down" className="pointer-events-none absolute top-[7px] right-1" />
            </div>
          </div>
          <div className="h-[4px] shrink-0 bg-[#dcdcdc]" />
          <h2 className="h-5 shrink-0 bg-[#bababa] pl-[3px] text-[13px] leading-[19px]">선택 필터</h2>
          <div className="grid h-[100px] shrink-0 grid-cols-[75px_75px] content-start pt-[6px] pl-[5px]">
            {filters.map((name) => (
              <label key={name} className="relative flex h-[15px] items-center gap-[4px] leading-[15px] whitespace-nowrap">
                <input type="checkbox" defaultChecked className="peer h-[13px] w-[13px] appearance-none border border-[#333] bg-white" />
                <svg
                  className="pointer-events-none absolute top-px left-0 hidden peer-checked:block"
                  width="13"
                  height="13"
                  viewBox="0 0 13 13"
                  fill="none"
                  stroke="#222"
                  aria-hidden="true"
                >
                  <path d="M2.5 6.5L5.5 9.5L11 3.5" strokeWidth="1.2" />
                </svg>
                {name}
              </label>
            ))}
          </div>
        </aside>
      </div>

      <dl className="flex h-[31px] shrink-0 gap-[35px] pl-[11px]">
        {counts.map(([name, n]) => (
          <div key={name}>
            <dt className="h-4 text-[13px] leading-[16px]">{name}</dt>
            <dd className="leading-[15px]">{n}</dd>
          </div>
        ))}
      </dl>

      <footer className="flex h-[23px] shrink-0 items-center border-t border-[#d9d9d9] whitespace-nowrap">
        <span className="w-[88px] border-r border-[#d0d0d0] pl-[2px] leading-[19px]">파일 'C:₩Use...</span>
        <span className="w-[85px] border-r border-[#d0d0d0] pl-1 leading-[19px]">Z 7.51</span>
        <span className="w-[180px] border-r border-[#d0d0d0] pl-1 leading-[19px] whitespace-pre">X 21.0000  Y 24.0000</span>
        <span className="min-w-0 flex-1 border-r border-[#d0d0d0] pl-1 leading-[19px] whitespace-pre">
          dx 101.0000  dy -106.0000  dist 146.4138
        </span>
        <span className="w-[205px] border-r border-[#d0d0d0] pl-1 leading-[19px] whitespace-pre">grid X 1.0000  Y 1.0000</span>
        <span className="w-[55px] border-r border-[#d0d0d0] pl-1 leading-[19px]">mm</span>
        <span className="w-[176px] border-r border-[#d0d0d0] pl-1 text-[13px] leading-[19px]">항목 선택</span>
        <span className="flex w-[206px] items-end justify-between pl-1 text-[13px] leading-[19px]">
          수평, 수직, 45도 각도로 제한
          <svg width="9" height="9" viewBox="0 0 9 9" fill="#bfbfbf" aria-hidden="true">
            <path d="M6 0h2v2h-2zM3 3h2v2h-2zM6 3h2v2h-2zM0 6h2v2h-2zM3 6h2v2h-2zM6 6h2v2h-2z" />
          </svg>
        </span>
      </footer>
    </div>
  );
}
